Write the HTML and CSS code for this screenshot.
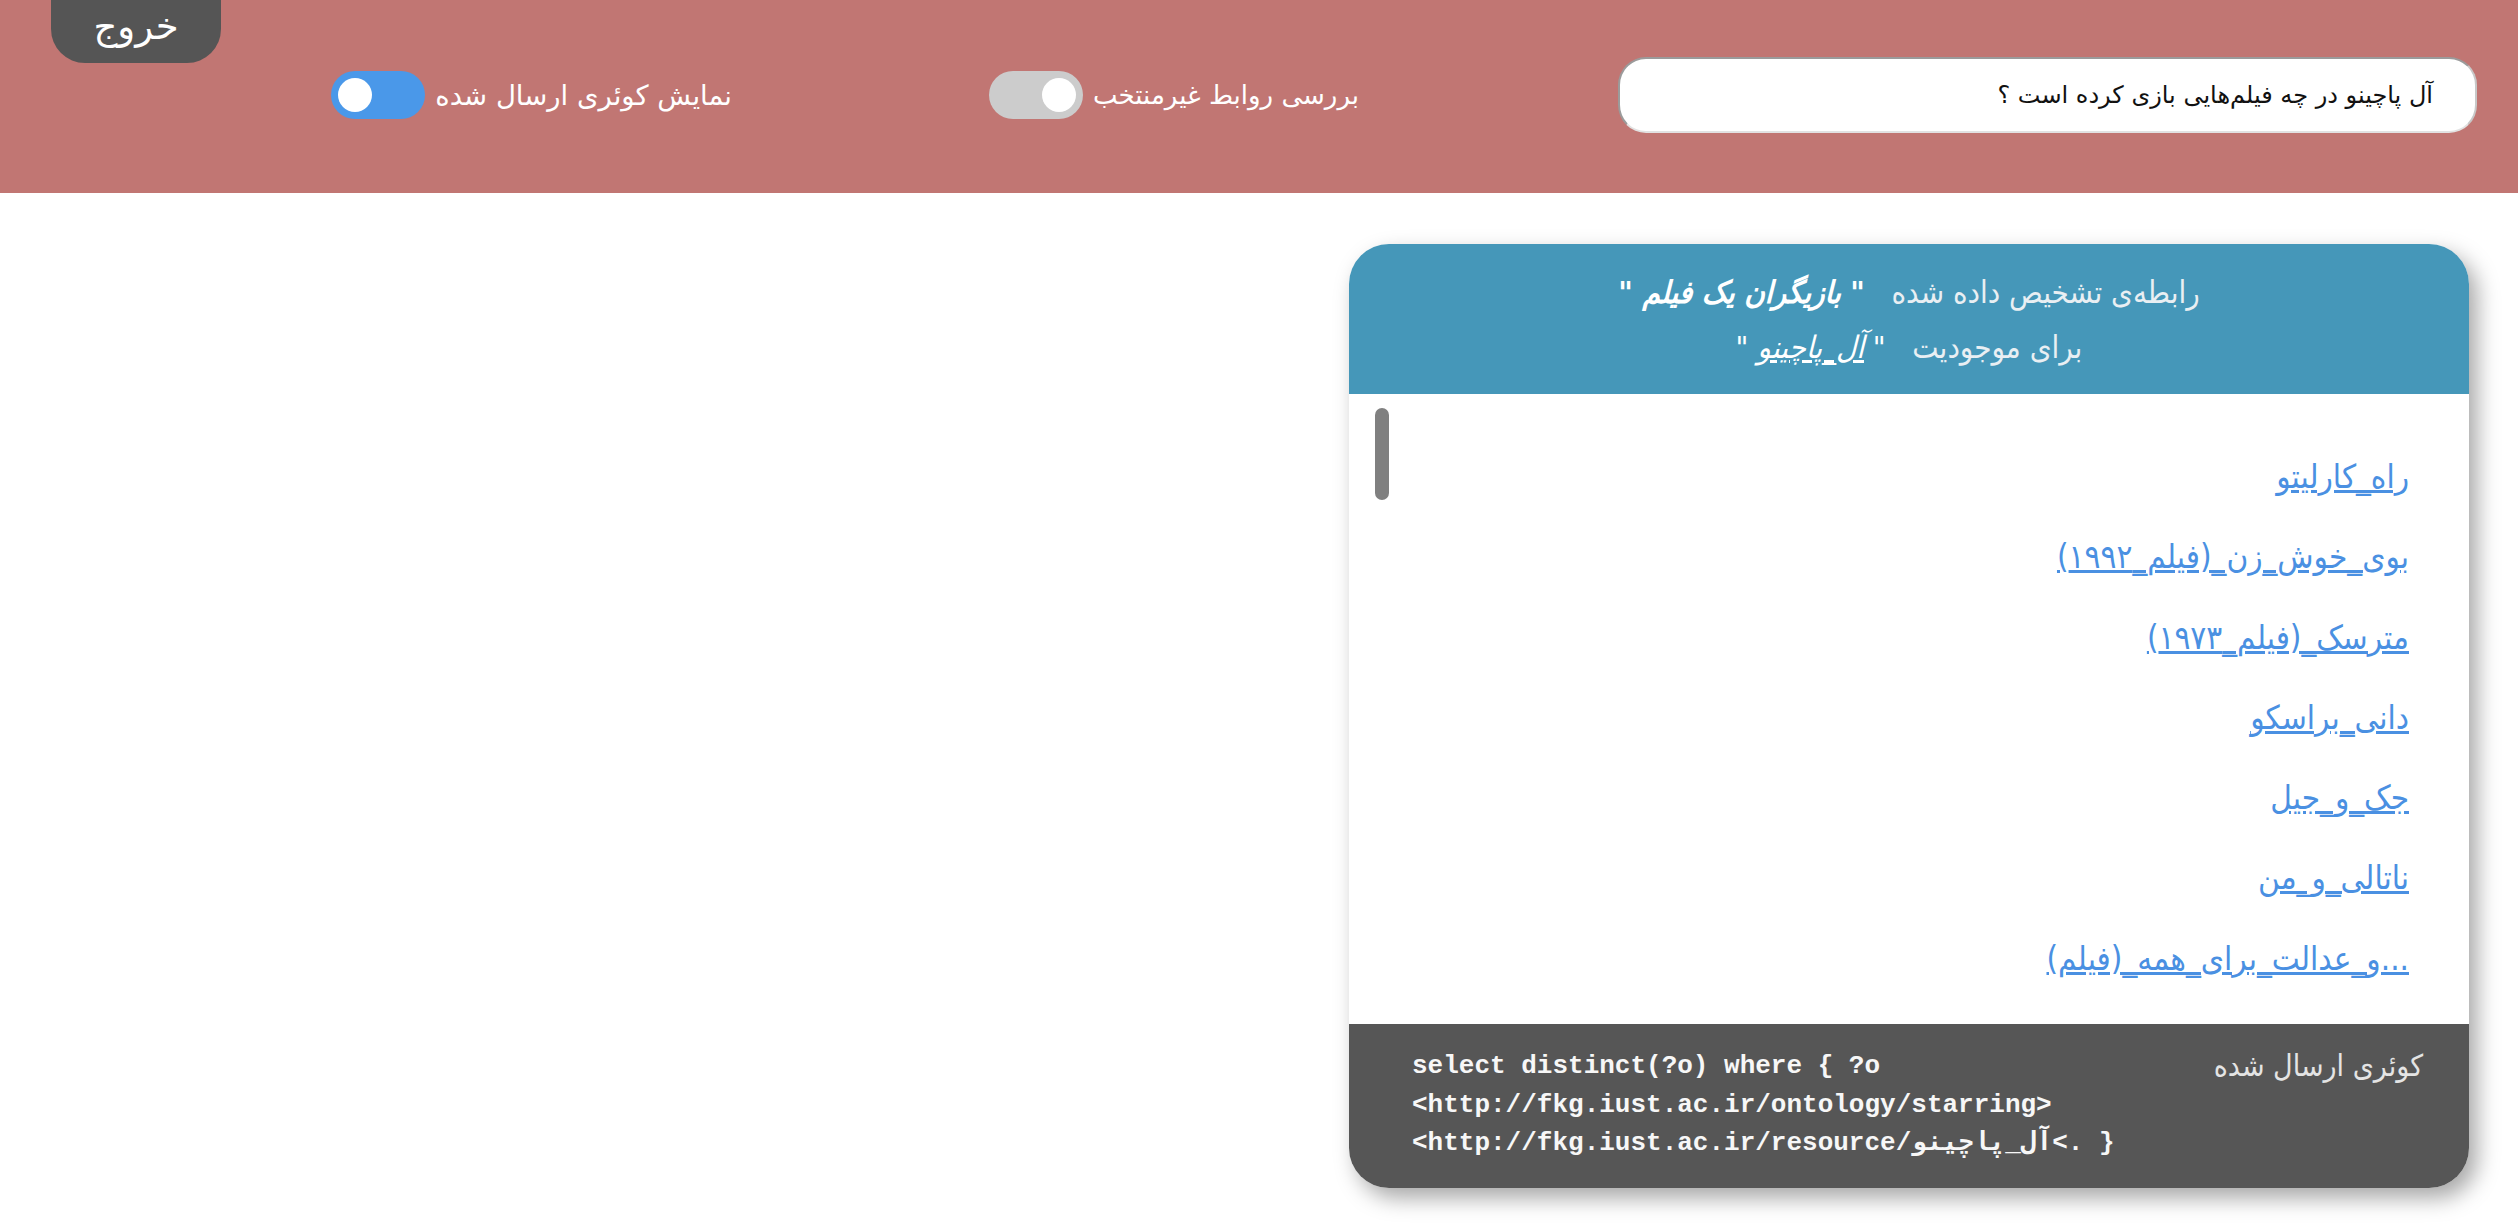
FILE: index.html
```html
<!DOCTYPE html>
<html lang="fa" dir="rtl">
<head>
<meta charset="utf-8">
<title>پرسش و پاسخ</title>
<link rel="stylesheet" href="styles.css">
</head>
<body>
<header class="topbar">
  <div class="search"><span class="search-text">آل پاچینو در چه فیلم‌هایی بازی کرده است ؟</span></div>
  <div class="switch-group group-relations">
    <span class="switch-label">بررسی روابط غیرمنتخب</span>
    <span class="switch off"><span class="knob"></span></span>
  </div>
  <div class="switch-group group-query">
    <span class="switch-label">نمایش کوئری ارسال شده</span>
    <span class="switch on"><span class="knob"></span></span>
  </div>
  <button class="logout">خروج</button>
</header>
<main class="content">
  <section class="card">
    <div class="card-head">
      <div class="head-line">رابطه‌ی تشخیص داده شده&nbsp;&nbsp; <span class="relation">" بازیگران یک فیلم "</span></div>
      <div class="head-line">برای موجودیت&nbsp;&nbsp; <span class="entity">" <a href="#">آل_پاچینو</a> "</span></div>
    </div>
    <div class="card-body">
      <ul class="results">
        <li><a href="#">راه_کارلیتو</a></li>
        <li><a href="#">بوی_خوش_زن_(فیلم_۱۹۹۲)</a></li>
        <li><a href="#">مترسک_(فیلم_۱۹۷۳)</a></li>
        <li><a href="#">دانی_براسکو</a></li>
        <li><a href="#">جک_و_جیل</a></li>
        <li><a href="#">ناتالی_و_من</a></li>
        <li><a href="#">...و_عدالت_برای_همه_(فیلم)</a></li>
      </ul>
      <div class="scroll-thumb"></div>
    </div>
    <div class="card-foot">
      <div class="foot-label">کوئری ارسال شده</div>
      <pre class="query">select distinct(?o) where { ?o
&lt;http://fkg.iust.ac.ir/ontology/starring&gt;
&lt;http://fkg.iust.ac.ir/resource/آل_پاچینو&lt;. }</pre>
    </div>
  </section>
</main>
</body>
</html>
```
FILE: styles.css
```css
* { box-sizing: border-box; }
html, body { margin: 0; padding: 0; background: #ffffff; }
body {
  font-family: "DejaVu Sans", "Noto Sans", sans-serif;
  color: #222;
  width: 2518px;
  height: 1225px;
  overflow: hidden;
}

.topbar {
  height: 193px;
  background: #c17673;
  display: flex;
  align-items: center;
  padding: 0 41px 4px 51px;
}

.search {
  width: 859px;
  height: 76px;
  background: #fff;
  border-radius: 28px;
  border: 2px solid;
  border-color: #9b9b9b #c8c8c8 #e2e2e2 #9b9b9b;
  display: flex;
  align-items: center;
  padding-right: 42px;
  flex: none;
}
.search-text {
  font-size: 24px;
  color: #111;
}

.switch-group {
  display: flex;
  align-items: center;
  gap: 10px;
  flex: none;
}
.group-relations { width: 370px; margin-right: 259px; }
.group-query { width: 403px; margin-right: 257px; }

.switch-label {
  color: #fff;
  font-size: 26px;
  white-space: nowrap;
}
.group-query .switch-label { font-size: 27.5px; }
.switch {
  width: 94px;
  height: 48px;
  border-radius: 24px;
  display: flex;
  align-items: center;
  padding: 0 7px;
  flex: none;
}
.switch.on { background: #4a98e9; justify-content: flex-end; }
.switch.off { background: #cccccc; justify-content: flex-start; }
.knob {
  width: 34px;
  height: 34px;
  border-radius: 50%;
  background: #fff;
}

.logout {
  align-self: flex-start;
  margin-right: auto;
  width: 170px;
  height: 63px;
  background: #555555;
  color: #fff;
  border: none;
  border-radius: 0 0 34px 34px;
  font-family: "DejaVu Sans", sans-serif;
  font-size: 37px;
  line-height: 1;
  padding: 0 0 10px;
}

.content {
  padding: 51px 49px 0;
}

.card {
  width: 1120px;
  border-radius: 40px;
  overflow: hidden;
  box-shadow: 8px 10px 22px rgba(0, 0, 0, 0.35);
  font-family: "DejaVu Sans", sans-serif;
  font-stretch: condensed;
}

.card-head {
  background: #4597b9;
  height: 150px;
  padding-top: 21px;
  text-align: center;
  color: #e9eff3;
  font-size: 31px;
}
.head-line { line-height: 55px; }
.relation, .entity {
  font-style: italic;
  font-weight: bold;
  color: #fff;
}
.entity { font-weight: normal; }
.entity a { color: #fff; text-decoration: underline; }

.card-body {
  position: relative;
  height: 630px;
  background: #fff;
  overflow: hidden;
}
.results {
  list-style: none;
  margin: 0;
  padding: 63px 60px 0;
  display: flex;
  flex-direction: column;
  gap: 40.3px;
}
.results li {
  line-height: 40px;
  height: 40px;
  font-size: 33px;
}
.results a {
  color: #4a90e2;
  text-decoration: underline;
}
.scroll-thumb {
  position: absolute;
  left: 26px;
  top: 14px;
  width: 14px;
  height: 92px;
  border-radius: 7px;
  background: #808080;
}

.card-foot {
  background: #565656;
  height: 164px;
  display: flex;
  justify-content: space-between;
  align-items: flex-start;
  padding: 23px 46px 0 63px;
}
.foot-label {
  color: #e4e4e4;
  font-size: 30px;
  line-height: 38px;
}
.query {
  margin: 0;
  direction: ltr;
  text-align: left;
  font-family: "Liberation Mono", "DejaVu Sans Mono", monospace;
  font-weight: bold;
  font-size: 26px;
  line-height: 38.5px;
  color: #f7f7f7;
}
```
